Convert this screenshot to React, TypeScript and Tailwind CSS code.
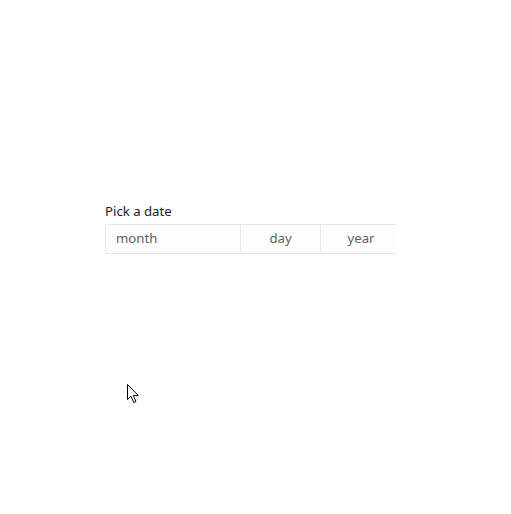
import React from "react";

const Cursor: React.FC = () => (
  <svg width="14" height="21" viewBox="0 0 14 21" className="absolute left-[127px] top-[384px]">
    <path
      d="M0.5 0.5 L0.5 15.5 L4 12.2 L6.8 18.6 L9 17.6 L6.3 11.4 L11.2 11.4 Z"
      fill="#fff"
      stroke="#000"
      strokeWidth="1"
      strokeLinejoin="miter"
    />
  </svg>
);

const App: React.FC = () => {
  return (
    <div
      className="relative w-[511px] h-[514px] bg-white"
      style={{ fontFamily: '"Segoe UI", "Noto Sans", "Open Sans", sans-serif' }}
    >
      <div className="pt-[202px] pl-[105px]">
        <div className="text-[13.2px] leading-[19px] text-[#1b1b1b]">Pick a date</div>
        <div className="mt-[3px] w-[291px] overflow-hidden">
          <div className="flex w-[296px] h-[30px] rounded-l-[4px] border border-r-0 border-[#e6e6e6] bg-[#fdfdfd] text-[13.2px] text-[#616161]">
            <div className="w-[135px] flex items-center pl-[10px] pb-[1px] border-r border-[#e8e8e8]">month</div>
            <div className="w-[80px] flex items-center justify-center pb-[1px] border-r border-[#e8e8e8]">day</div>
            <div className="w-[80px] flex items-center justify-center pb-[1px]">year</div>
          </div>
        </div>
      </div>
      <Cursor />
    </div>
  );
};

export default App;
